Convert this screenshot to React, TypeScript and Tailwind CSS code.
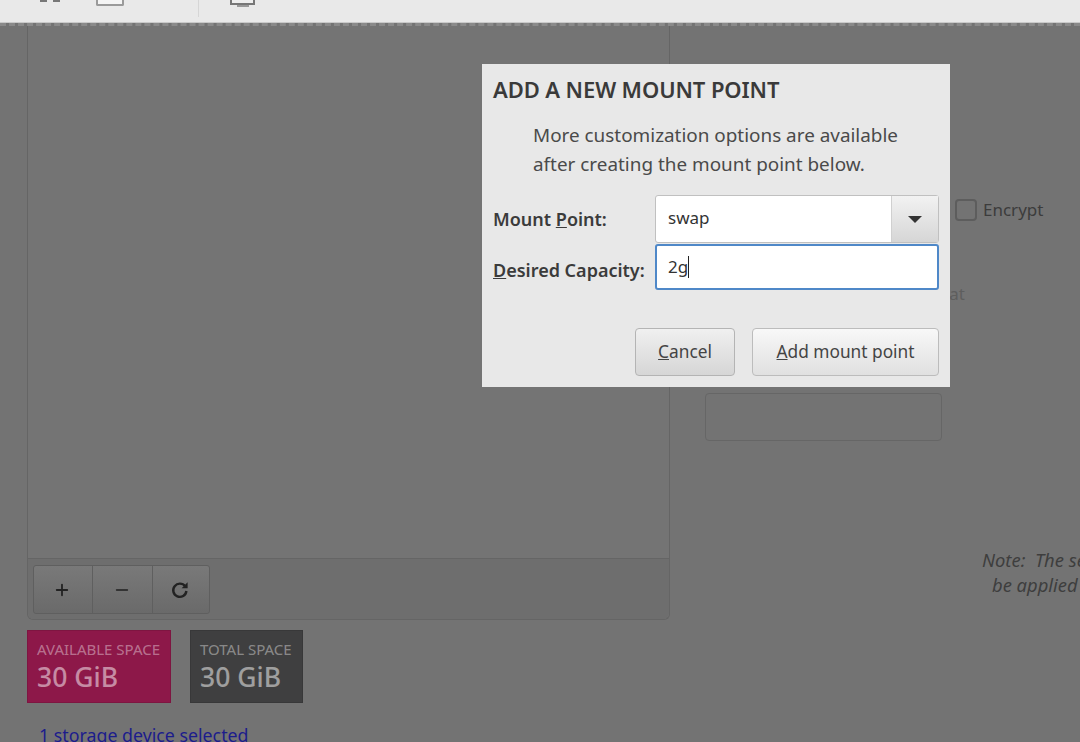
import { Plus, Minus } from "lucide-react";

const font = "font-['Noto_Sans','Open_Sans',sans-serif]";

function RefreshIcon() {
  return (
    <svg width="20" height="20" viewBox="0 0 20 20" fill="none">
      <path d="M15.2 6.4A6.6 6.6 0 1 0 16.4 11" stroke="#222222" strokeWidth="2.4" fill="none" />
      <path d="M11.6 8.2 L17.6 8.2 L17.6 2.2 Z" fill="#222222" />
    </svg>
  );
}

function Tile({ label, bg, width }: { label: string; bg: string; width: string }) {
  return (
    <div className={`${bg} ${width} h-[73px] pl-[9px] pt-[8px] border border-black/10`}>
      <div className="text-[15px] leading-[20px] text-white/40 whitespace-nowrap">{label}</div>
      <div className="mt-[2px] text-[26.5px] leading-[33px] font-medium text-white/50 whitespace-nowrap">30 GiB</div>
    </div>
  );
}

export default function App() {
  return (
    <div className={`relative w-[1080px] h-[742px] overflow-hidden bg-[#737373] ${font}`}>
      {/* top toolbar, mostly scrolled off */}
      <div className="h-[23px] bg-[#e9e9e9] border-b border-[#c9c9c9] flex items-start relative">
        <div className="ml-[40px] flex gap-[6px]">
          <div className="w-[7px] h-[2px] bg-[#777777]" />
          <div className="w-[7px] h-[2px] bg-[#777777]" />
        </div>
        <div className="ml-[36px] w-[28px] h-[6px] bg-[#f4f4f4] border-x-2 border-b-2 border-[#9a9a9a] rounded-b-[2px]" />
        <div className="ml-[74px] w-px h-[17px] bg-[#d6d6d6]" />
        <div className="ml-[31px] flex flex-col items-center">
          <div className="w-[25px] h-[5px] bg-[#eeeeee] border-x-2 border-b-2 border-[#777777]" />
          <div className="w-[12px] h-[2px] bg-[#999999]" />
        </div>
      </div>
      <div className="h-[3px] border-t-[3px] border-dashed border-[#8a8a8a]" />

      <div className="flex">
        {/* mount point list */}
        <div className="ml-[27px] w-[643px] shrink-0">
          <div className="h-[594px] flex flex-col bg-[#747474] border-x border-b border-[#656565] rounded-b-[6px]">
            <div className="flex-1" />
            <div className="h-[61px] bg-[#6e6e6e] border-t border-[#656565] rounded-b-[6px] pl-[5px] pt-[6px]">
              <div className="flex w-[177px] h-[49px] border border-[#5f5f5f] rounded-[3px] bg-gradient-to-b from-[#797979] to-[#6a6a6a]">
                <div className="w-[59px] pr-[2px] flex items-center justify-center border-r border-[#5f5f5f]">
                  <Plus size={18} strokeWidth={2.4} color="#222222" />
                </div>
                <div className="w-[60px] pr-[2px] flex items-center justify-center border-r border-[#5f5f5f]">
                  <Minus size={18} strokeWidth={2.4} color="#333333" />
                </div>
                <div className="flex-1 pr-[2px] flex items-center justify-center">
                  <RefreshIcon />
                </div>
              </div>
            </div>
          </div>
          <div className="mt-[10px] flex gap-[19px]">
            <Tile label="AVAILABLE SPACE" bg="bg-[#8d1849]" width="w-[144px]" />
            <Tile label="TOTAL SPACE" bg="bg-[#3f3f40]" width="w-[113px]" />
          </div>
          <div className="mt-[20px] ml-[12px] text-[17.8px] leading-[24px] text-[#1c1c8c] whitespace-nowrap">
            1 storage device selected
          </div>
        </div>

        {/* selected mount point details */}
        <div className="flex-1 min-w-0">
          <div className="mt-[172px] ml-[285px] flex items-center h-[24px]">
            <div className="w-[22px] h-[22px] border-2 border-[#5d5d5d] rounded-[4px]" />
            <span className="ml-[6px] text-[17px] text-[#3c3c3c]">Encrypt</span>
          </div>
          <div className="mt-[60px] ml-[220px] text-[17px] leading-[24px] text-[#5e5e5e]">Reformat</div>
          <div className="mt-[87px] ml-[35px] w-[237px] h-[48px] border border-[#666666] rounded-[4px]" />
          <div className="mt-[106px] ml-[312px] text-[18.4px] leading-[25px] italic text-[#3e3e3e] whitespace-nowrap">
            Note:&nbsp; The settings you make
            <div className="ml-[10px]">be applied until you click</div>
          </div>
        </div>
      </div>

      {/* dialog */}
      <div className="absolute left-[482px] top-[64px] w-[468px] h-[323px] bg-[#e8e8e8] text-[#3b3b3b] px-[11px]">
        <h2 className="mt-[10px] text-[22px] leading-[30px] font-semibold text-[#3a3a3a] whitespace-nowrap tracking-[-0.1px]">
          ADD A NEW MOUNT POINT
        </h2>
        <p className="mt-[17px] ml-[40px] text-[18.9px] leading-[28.5px] text-[#4a4a4a] whitespace-nowrap">
          More customization options are available
          <br />
          after creating the mount point below.
        </p>
        <div className="mt-[17px] flex items-center h-[48px]">
          <div className="w-[162px] text-[18px] font-semibold whitespace-nowrap">
            Mount <span className="underline">P</span>oint:
          </div>
          <div className="w-[284px] h-[48px] flex border border-[#c0c0c0] rounded-[3px] bg-white">
            <div className="flex-1 pl-[12px] text-[17px] leading-[44px] text-[#333333]">swap</div>
            <div className="w-[47px] flex items-center justify-center border-l border-[#d0d0d0] bg-gradient-to-b from-[#f2f2f2] to-[#d6d6d6]">
              <div className="w-0 h-0 border-x-[7px] border-x-transparent border-t-[7px] border-t-[#333333]" />
            </div>
          </div>
        </div>
        <div className="flex items-center h-[46px] mt-[1px]">
          <div className="w-[162px] pt-[7px] text-[18px] font-semibold whitespace-nowrap">
            <span className="underline">D</span>esired Capacity:
          </div>
          <div className="w-[284px] h-[46px] flex items-center border-2 border-[#4f88c8] rounded-[3px] bg-white pl-[11px]">
            <span className="text-[17px] text-[#333333]">2g</span>
            <span className="w-px h-[22px] bg-[#222222]" />
          </div>
        </div>
        <div className="mt-[38px] flex justify-end gap-[17px]">
          <div className="w-[100px] h-[48px] flex items-center justify-center border border-[#b4b4b4] rounded-[4px] bg-gradient-to-b from-[#f0f0f0] to-[#d6d6d6] text-[17.3px] text-[#444444]">
            <span><span className="underline">C</span>ancel</span>
          </div>
          <div className="w-[187px] h-[48px] flex items-center justify-center border border-[#bcbcbc] rounded-[4px] bg-gradient-to-b from-[#f8f8f8] to-[#e0e0e0] text-[17.3px] text-[#444444]">
            <span><span className="underline">A</span>dd mount point</span>
          </div>
        </div>
      </div>
    </div>
  );
}
